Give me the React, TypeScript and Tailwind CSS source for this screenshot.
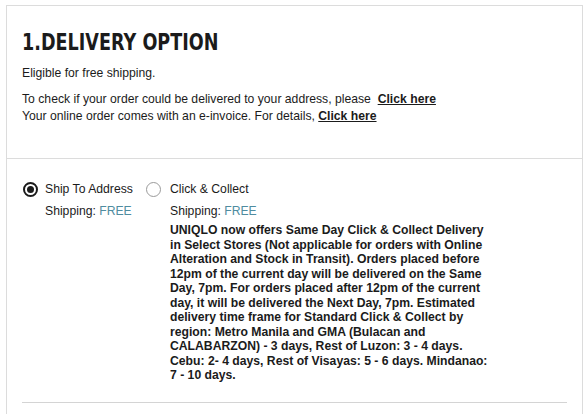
function Radio({ checked }: { checked: boolean }) {
  return checked ? (
    <span className="flex h-[15px] w-[15px] shrink-0 items-center justify-center rounded-full border-2 border-[#1b1b1b]">
      <span className="h-[7px] w-[7px] rounded-full bg-[#1b1b1b]" />
    </span>
  ) : (
    <span className="h-[15px] w-[15px] shrink-0 rounded-full border border-[#9a9a9a] bg-white" />
  );
}

export default function App() {
  return (
    <div className="min-h-[414px] bg-white font-['Liberation_Sans',Arial,sans-serif] text-[12.2px] text-[#1b1b1b]">
      <div className="ml-[6px] mt-[5px] min-h-[420px] w-[577px] border border-[#dcdcdc]">
        <section className="px-[15px] pb-[33px] pt-[23px]">
          <h2 className="origin-left scale-x-[0.765] font-['DejaVu_Sans',sans-serif] text-[23px] font-bold leading-[26px] whitespace-nowrap">
            1.DELIVERY OPTION
          </h2>
          <p className="mt-[10px] leading-[17px]">Eligible for free shipping.</p>
          <p className="mt-[9px] leading-[17px]">
            To check if your order could be delivered to your address, please&nbsp;{" "}
            <a className="font-bold underline">Click here</a>
          </p>
          <p className="leading-[17px]">
            Your online order comes with an e-invoice. For details,{" "}
            <a className="font-bold underline">Click here</a>
          </p>
        </section>

        <div className="border-t border-[#dcdcdc]" />

        <section className="px-[15px] pt-[23px]">
          <div className="flex border-b border-[#d4d4d4] pb-[19px]">
            <div className="flex w-[124px] shrink-0 gap-[7px] pl-[1px]">
              <Radio checked />
              <div className="leading-[15px]">
                <div>Ship To Address</div>
                <div className="mt-[7px]">
                  Shipping: <span className="text-[#4f8ca0]">FREE</span>
                </div>
              </div>
            </div>
            <div className="flex gap-[9px]">
              <Radio checked={false} />
              <div className="leading-[15px]">
                <div>Click &amp; Collect</div>
                <div className="mt-[7px]">
                  Shipping: <span className="text-[#4f8ca0]">FREE</span>
                </div>
                <p className="mt-[4px] w-[326px] font-bold leading-[14.5px]">
                  UNIQLO now offers Same Day Click &amp; Collect Delivery in Select Stores (Not applicable for orders with Online Alteration and Stock in Transit). Orders placed before 12pm of the current day will be delivered on the Same Day, 7pm. For orders placed after 12pm of the current day, it will be delivered the Next Day, 7pm. Estimated delivery time frame for Standard Click &amp; Collect by region: Metro Manila and GMA (Bulacan and CALABARZON) - 3 days, Rest of Luzon: 3 - 4 days. Cebu: 2- 4 days, Rest of Visayas: 5 - 6 days. Mindanao: 7 - 10 days.
                </p>
              </div>
            </div>
          </div>
        </section>
      </div>
    </div>
  );
}
